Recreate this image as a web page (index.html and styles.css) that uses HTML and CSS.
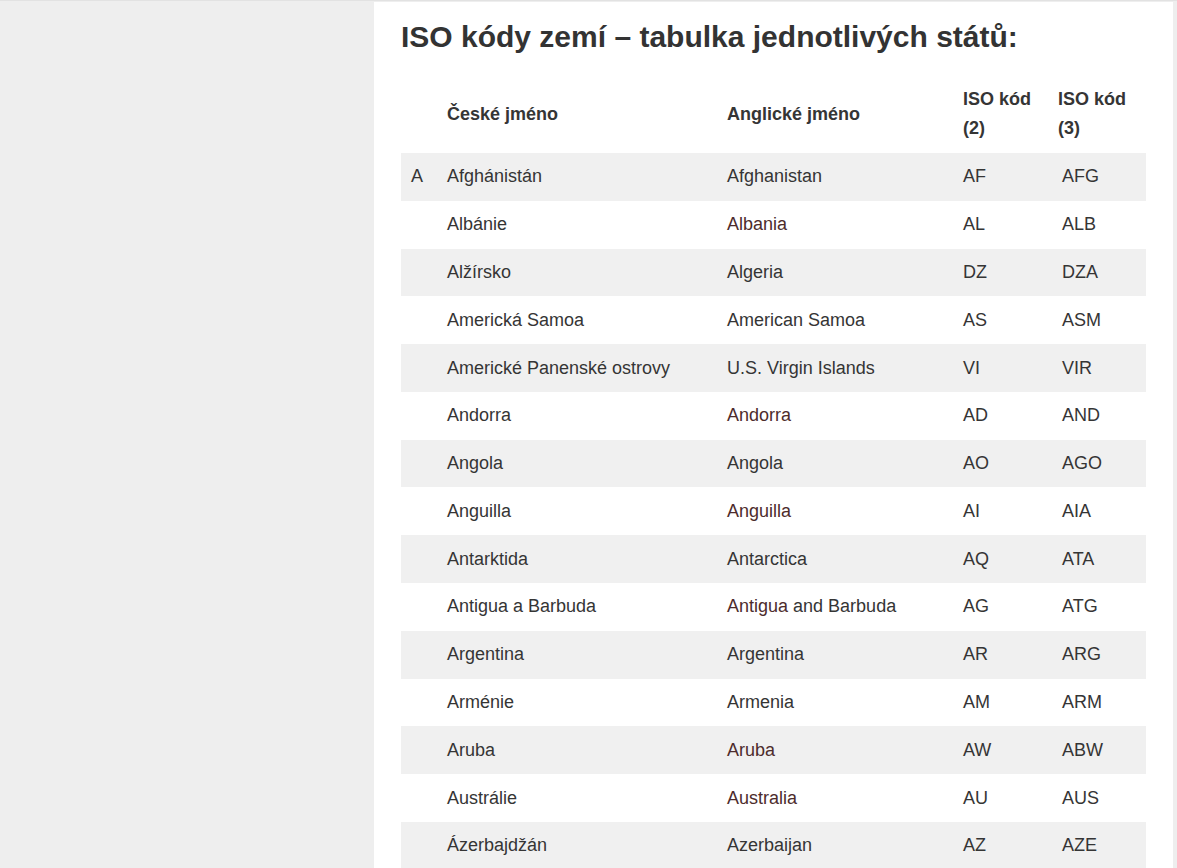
FILE: index.html
```html
<!DOCTYPE html>
<html lang="cs">
<head>
<meta charset="utf-8">
<title>ISO kódy zemí</title>
<link rel="stylesheet" href="styles.css">
</head>
<body>
<div class="layout">
  <aside class="sidebar"></aside>
  <main class="panel">
    <h2 class="title">ISO kódy zemí – tabulka jednotlivých států:</h2>
    <table class="iso">
      <colgroup>
        <col class="c-letter"><col class="c-cz"><col class="c-en"><col class="c-iso2"><col class="c-iso3">
      </colgroup>
      <thead>
        <tr><th></th><th>České jméno</th><th>Anglické jméno</th><th>ISO kód (2)</th><th>ISO kód (3)</th></tr>
      </thead>
      <tbody>
        <tr><td>A</td><td>Afghánistán</td><td>Afghanistan</td><td>AF</td><td class="i3">AFG</td></tr>
        <tr><td></td><td>Albánie</td><td><a href="#">Albania</a></td><td>AL</td><td class="i3">ALB</td></tr>
        <tr><td></td><td>Alžírsko</td><td>Algeria</td><td>DZ</td><td class="i3">DZA</td></tr>
        <tr><td></td><td>Americká Samoa</td><td>American Samoa</td><td>AS</td><td class="i3">ASM</td></tr>
        <tr><td></td><td>Americké Panenské ostrovy</td><td>U.S. Virgin Islands</td><td>VI</td><td class="i3">VIR</td></tr>
        <tr><td></td><td>Andorra</td><td><a href="#">Andorra</a></td><td>AD</td><td class="i3">AND</td></tr>
        <tr><td></td><td>Angola</td><td>Angola</td><td>AO</td><td class="i3">AGO</td></tr>
        <tr><td></td><td>Anguilla</td><td><a href="#">Anguilla</a></td><td>AI</td><td class="i3">AIA</td></tr>
        <tr><td></td><td>Antarktida</td><td>Antarctica</td><td>AQ</td><td class="i3">ATA</td></tr>
        <tr><td></td><td>Antigua a Barbuda</td><td><a href="#">Antigua</a> and Barbuda</td><td>AG</td><td class="i3">ATG</td></tr>
        <tr><td></td><td>Argentina</td><td>Argentina</td><td>AR</td><td class="i3">ARG</td></tr>
        <tr><td></td><td>Arménie</td><td>Armenia</td><td>AM</td><td class="i3">ARM</td></tr>
        <tr><td></td><td>Aruba</td><td><a href="#">Aruba</a></td><td>AW</td><td class="i3">ABW</td></tr>
        <tr><td></td><td>Austrálie</td><td><a href="#">Australia</a></td><td>AU</td><td class="i3">AUS</td></tr>
        <tr><td></td><td>Ázerbajdžán</td><td>Azerbaijan</td><td>AZ</td><td class="i3">AZE</td></tr>
      </tbody>
    </table>
  </main>
</div>
</body>
</html>
```

FILE: styles.css
```css
html, body {
  margin: 0;
  padding: 0;
}
body {
  background: #eeeeee;
  border-top: 1px solid #e2e2e2;
  padding-top: 1px;
  font-family: "Liberation Sans", Arial, sans-serif;
  color: #353535;
  height: 866px;
  overflow: hidden;
}
.layout {
  display: flex;
  padding-right: 4px;
}
.sidebar {
  width: 374px;
  flex: 0 0 374px;
}
.panel {
  flex: 1 1 auto;
  background: #ffffff;
  padding: 17px 27px 40px 27px;
  min-height: 900px;
}
.title {
  margin: 0 0 20px 0;
  font-size: 30px;
  line-height: 36px;
  font-weight: 700;
  color: #333333;
}
.iso {
  width: 745px;
  border-collapse: collapse;
  table-layout: fixed;
  font-size: 18px;
}
.c-letter { width: 36px; }
.c-cz { width: 280px; }
.c-en { width: 236px; }
.c-iso2 { width: 95px; }
.c-iso3 { width: 98px; }
.iso th {
  text-align: left;
  font-weight: 700;
  line-height: 29px;
  padding: 10px 10px 10px 10px;
  vertical-align: middle;
}
.iso td {
  line-height: 30px;
  padding: 8.4px 10px 9.4px 10px;
  vertical-align: middle;
  white-space: nowrap;
}
.iso tbody tr:nth-child(odd) {
  background: #f0f0f0;
}
.iso td.i3 {
  padding-left: 14px;
}
.iso a {
  color: #4d2c2c;
  text-decoration: none;
}
```
